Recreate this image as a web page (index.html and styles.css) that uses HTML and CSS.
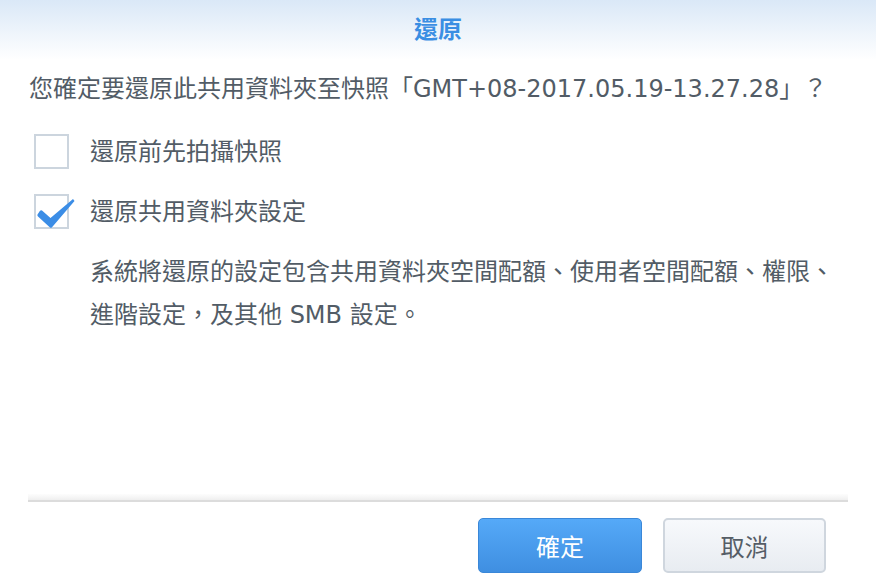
FILE: index.html
```html
<!DOCTYPE html>
<html lang="zh-Hant">
<head>
  <meta charset="UTF-8" />
  <meta name="viewport" content="width=device-width, initial-scale=1.0"/>
  <title>還原</title>
  <link rel="stylesheet" href="styles.css">
</head>
<body>

  <div class="dialog">
    <!-- Title bar -->
    <div class="dialog-header">還原</div>

    <div class="dialog-body">
      <p class="question">您確定要還原此共用資料夾至快照「GMT+08-2017.05.19-13.27.28」？</p>

      <label class="option">
        <span class="checkbox"></span>
        <span class="option-label">還原前先拍攝快照</span>
      </label>

      <label class="option">
        <span class="checkbox checked">
          <svg class="check-mark" width="42" height="36" viewBox="0 0 42 36">
            <path d="M3.5 20.5 Q3 21.5 4 22.5 L16 33.5 Q17 34.3 18 33.3 L40.5 7 L39 5 L16.5 24 L8 16.5 Q7 16 6 16.8 Z" />
          </svg>
        </span>
        <span class="option-label">還原共用資料夾設定</span>
      </label>

      <p class="note">系統將還原的設定包含共用資料夾空間配額、使用者空間配額、權限、進階設定，及其他 SMB 設定。</p>
    </div>

    <!-- Footer -->
    <div class="dialog-footer">
      <div class="separator"></div>
      <div class="buttons">
        <button class="btn btn-primary">確定</button>
        <button class="btn btn-default">取消</button>
      </div>
    </div>
  </div>

</body>
</html>
```

FILE: styles.css
```css
body {
  margin: 0;
  font-family: "DejaVu Sans", "Noto Sans CJK TC", sans-serif;
  background: #fff;
  color: #525c66;
}

.dialog {
  width: 876px;
  height: 584px;
  display: flex;
  flex-direction: column;
}

.dialog-header {
  height: 60px;
  line-height: 60px;
  text-align: center;
  font-size: 24px;
  font-weight: bold;
  color: #3a8ee3;
  background: linear-gradient(#dae8f7, #ffffff);
}

.dialog-body {
  padding: 0 28px 0 29px;
}

.question {
  margin: 13px 0 0;
  font-size: 24px;
  line-height: 32px;
  white-space: nowrap;
}

.option {
  display: flex;
  align-items: center;
  margin-top: 29px;
  margin-left: 5px;
}

.option + .option {
  margin-top: 25px;
}

.checkbox {
  position: relative;
  width: 31px;
  height: 31px;
  border: 2px solid #ccd5de;
  background: #fff;
  flex-shrink: 0;
}

.check-mark {
  position: absolute;
  left: -2px;
  top: -2px;
  overflow: visible;
}

.check-mark path {
  fill: #3b8de6;
}

.option-label {
  margin-left: 21px;
  font-size: 24px;
  line-height: 32px;
}

.note {
  margin: 22px 0 0 61px;
  font-size: 24px;
  line-height: 43px;
}

.dialog-footer {
  margin-top: auto;
  padding-bottom: 11px;
}

.separator {
  margin: 0 28px;
  height: 6px;
  background: linear-gradient(#fdfdfd, #efefef);
  border-bottom: 2px solid #dcdcdc;
}

.buttons {
  display: flex;
  justify-content: flex-end;
  gap: 21px;
  margin-top: 16px;
  padding-right: 50px;
}

.btn {
  height: 55px;
  border-radius: 5px;
  font-family: "DejaVu Sans", "Noto Sans CJK TC", sans-serif;
  font-size: 24px;
  cursor: pointer;
}

.btn-primary {
  width: 164px;
  color: #fff;
  background: linear-gradient(#55a9f8, #3f8fe1);
  border: 1px solid #3a87d8;
}

.btn-default {
  width: 163px;
  color: #555d66;
  background: linear-gradient(#f7f9fc, #e8ecf1);
  border: 2px solid #cfd6de;
}
```
